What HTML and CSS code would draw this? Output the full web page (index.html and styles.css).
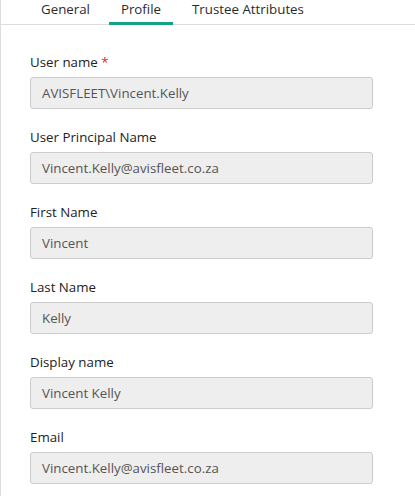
FILE: index.html
```html
<!DOCTYPE html>
<html>
<head>
<meta charset="utf-8">
<link rel="stylesheet" href="styles.css">
</head>
<body>
<div class="page">
  <div class="tabs">
    <div class="tab">General</div>
    <div class="tab active">Profile</div>
    <div class="tab">Trustee Attributes</div>
  </div>
  <div class="form">
    <div class="field">
      <label class="label">User name <span class="req">*</span></label>
      <div class="input">AVISFLEET\Vincent.Kelly</div>
    </div>
    <div class="field">
      <label class="label">User Principal Name</label>
      <div class="input">Vincent.Kelly@avisfleet.co.za</div>
    </div>
    <div class="field">
      <label class="label">First Name</label>
      <div class="input">Vincent</div>
    </div>
    <div class="field">
      <label class="label">Last Name</label>
      <div class="input">Kelly</div>
    </div>
    <div class="field">
      <label class="label">Display name</label>
      <div class="input">Vincent Kelly</div>
    </div>
    <div class="field">
      <label class="label">Email</label>
      <div class="input">Vincent.Kelly@avisfleet.co.za</div>
    </div>
  </div>
</div>
</body>
</html>
```

FILE: styles.css
```css
html, body {
  margin: 0;
  padding: 0;
  background: #fff;
}
body {
  font-family: "Open Sans", "Liberation Sans", sans-serif;
  font-size: 13.3px;
  line-height: 18px;
  color: #222;
  height: 496px;
  overflow: hidden;
}
.page {
  border-left: 1px solid #dddddd;
  height: 100%;
}
.tabs {
  display: flex;
  height: 24px;
  padding-left: 28px;
  border-bottom: 1px solid #dddddd;
}
.tab {
  padding: 0 12px;
  margin-right: 7px;
  line-height: 18px;
  color: #2b2b2b;
  height: 25px;
  box-sizing: border-box;
}
.tab.active {
  border-bottom: 3px solid #12a286;
  position: relative;
  z-index: 1;
}
.form {
  padding: 28px 0 0 29px;
}
.field {
  display: flex;
  flex-direction: column;
  gap: 6px;
  margin-bottom: 19px;
  width: 343px;
}
.label {
  color: #222;
}
.req {
  color: #e8222a;
}
.input {
  box-sizing: border-box;
  height: 32px;
  border: 1px solid #cccccc;
  border-radius: 3px;
  background: #eeeeee;
  color: #555;
  padding: 6px 11px;
}
```
